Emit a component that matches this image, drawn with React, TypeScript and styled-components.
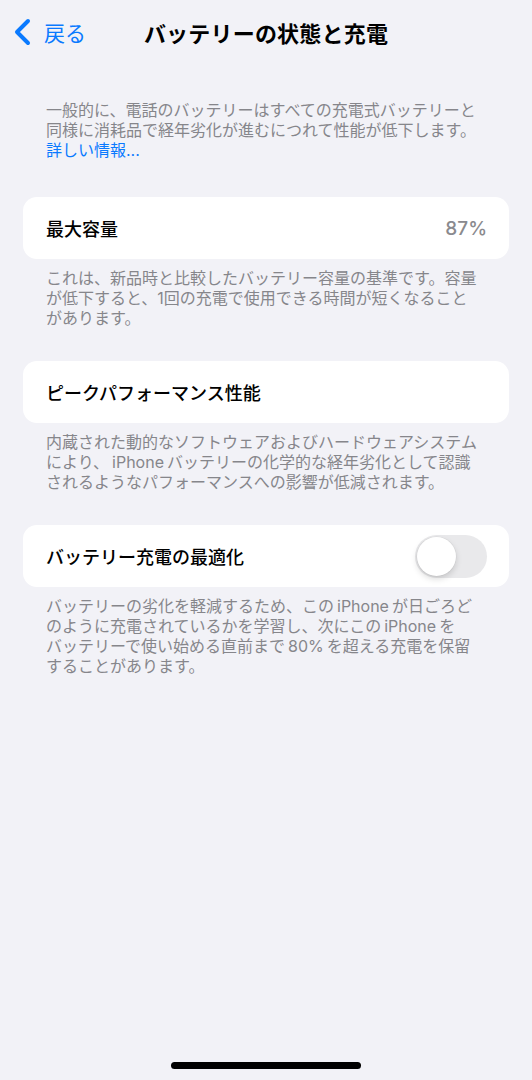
import React, { useState } from 'react';
import styled, { createGlobalStyle } from 'styled-components';

const GlobalStyle = createGlobalStyle`
    html, body {
        margin: 0;
        padding: 0;
        background: #f2f2f7;
    }
    body {
        font-family: "Inter", "Noto Sans CJK JP", sans-serif;
        -webkit-font-smoothing: antialiased;
    }
`;

const Screen = styled.div`
    width: 532px;
    height: 1080px;
    background: #f2f2f7;
    display: flex;
    flex-direction: column;
    overflow: hidden;
`;

const NavBar = styled.div`
    height: 64px;
    display: grid;
    grid-template-columns: 110px 1fr 110px;
    align-items: center;
`;

const BackButton = styled.div`
    display: flex;
    align-items: center;
    gap: 13px;
    padding-left: 13px;
    color: #0a7aff;
    font-size: 21px;
    font-weight: 400;
`;

const Title = styled.div`
    text-align: center;
    font-size: 22px;
    font-weight: 700;
    color: #000;
    letter-spacing: 0.2px;
`;

const Content = styled.div`
    flex: 1;
    padding: 36px 23px 0;
    display: flex;
    flex-direction: column;
`;

const Note = styled.p<{ $header?: boolean }>`
    margin: ${p => (p.$header ? '0 0 37px' : '9px 0 33px')};
    padding: 0 23px;
    font-size: 16px;
    line-height: 20px;
    color: #86868b;
    white-space: nowrap;
`;

const Latin = styled.span`
    margin: 0 3px;
`;

const Link = styled.span`
    color: #0a7aff;
`;

const Card = styled.div`
    height: 62px;
    background: #fff;
    border-radius: 14px;
    display: flex;
    align-items: center;
    justify-content: space-between;
    padding: 0 22px 0 23px;
`;

const Label = styled.span`
    font-size: 18px;
    font-weight: 500;
    color: #000;
`;

const Value = styled.span`
    font-size: 19px;
    font-weight: 500;
    color: #8a8a8e;
`;

const Toggle = styled.button<{ $on: boolean }>`
    width: 72px;
    height: 43px;
    border: none;
    border-radius: 22px;
    padding: 2px;
    background: ${p => (p.$on ? '#34c759' : '#e9e9eb')};
    display: flex;
    justify-content: ${p => (p.$on ? 'flex-end' : 'flex-start')};
    cursor: pointer;
`;

const Knob = styled.span`
    width: 39px;
    height: 39px;
    border-radius: 50%;
    background: #fff;
    box-shadow: 0 3px 6px rgba(0, 0, 0, 0.15), 0 0 0 0.5px rgba(0, 0, 0, 0.06);
`;

const HomeBar = styled.div`
    width: 190px;
    height: 7px;
    border-radius: 4px;
    background: #000;
    align-self: center;
    margin-bottom: 11px;
`;

const Chevron = () => (
    <svg width="18" height="28" viewBox="0 0 18 28">
        <path d="M15 3 L4 14 L15 25" fill="none" stroke="#0a7aff" strokeWidth="4" strokeLinecap="round" strokeLinejoin="round" />
    </svg>
);

export default function App() {
    const [optimized, setOptimized] = useState(false);

    return <Screen>
        <GlobalStyle />
        <NavBar>
            <BackButton>
                <Chevron />
                <span>戻る</span>
            </BackButton>
            <Title>バッテリーの状態と充電</Title>
            <div />
        </NavBar>
        <Content>
            <Note $header>
                一般的に、電話のバッテリーはすべての充電式バッテリーと<br />
                同様に消耗品で経年劣化が進むにつれて性能が低下します。<br />
                <Link>詳しい情報...</Link>
            </Note>

            <Card>
                <Label>最大容量</Label>
                <Value>87%</Value>
            </Card>
            <Note>
                これは、新品時と比較したバッテリー容量の基準です。容量<br />
                が低下すると、1回の充電で使用できる時間が短くなること<br />
                があります。
            </Note>

            <Card>
                <Label>ピークパフォーマンス性能</Label>
            </Card>
            <Note>
                内蔵された動的なソフトウェアおよびハードウェアシステム<br />
                により、<Latin>iPhone</Latin>バッテリーの化学的な経年劣化として認識<br />
                されるようなパフォーマンスへの影響が低減されます。
            </Note>

            <Card>
                <Label>バッテリー充電の最適化</Label>
                <Toggle $on={optimized} onClick={() => setOptimized(!optimized)}>
                    <Knob />
                </Toggle>
            </Card>
            <Note>
                バッテリーの劣化を軽減するため、この<Latin>iPhone</Latin>が日ごろど<br />
                のように充電されているかを学習し、次にこの<Latin>iPhone</Latin>を<br />
                バッテリーで使い始める直前まで<Latin>80%</Latin>を超える充電を保留<br />
                することがあります。
            </Note>
        </Content>
        <HomeBar />
    </Screen>;
}
